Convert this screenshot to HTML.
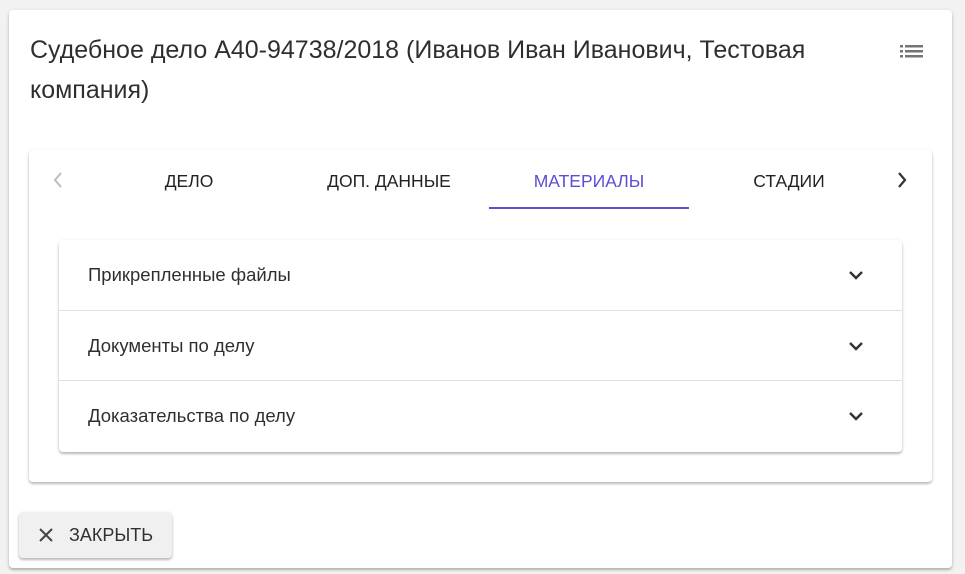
<!DOCTYPE html>
<html><head><meta charset="utf-8"><style>
*{box-sizing:border-box;margin:0;padding:0}
body{width:965px;height:574px;background:#f2f2f2;font-family:"Liberation Sans",sans-serif;color:rgba(0,0,0,.87);position:relative;overflow:hidden}
.outer{position:absolute;left:9px;top:10px;width:943px;height:558px;background:#fff;border-radius:4px;box-shadow:0 2px 2px rgba(0,0,0,.2),0 1px 5px rgba(0,0,0,.12)}
.title{position:absolute;left:21px;top:20px;width:820px;font-size:25px;line-height:40px;color:rgba(0,0,0,.82)}
.menu{position:absolute;left:891px;top:32px}
.inner{position:absolute;left:20px;top:140px;width:903px;height:332px;background:#fff;border-radius:4px;box-shadow:0 2px 2px rgba(0,0,0,.2),0 1px 4px rgba(0,0,0,.12)}
.tab{position:absolute;top:0;height:60px;line-height:62px;text-align:center;font-size:17.5px;width:200px;color:rgba(0,0,0,.87)}
.tab.act{color:#5a4ed6}
.ink{position:absolute;left:460px;top:57px;width:200px;height:2px;background:#5a4ed6}
.panel{position:absolute;left:30px;top:90px;width:843px;height:212px;background:#fff;border-radius:4px;box-shadow:0 2px 2px rgba(0,0,0,.22),0 1px 4px rgba(0,0,0,.1)}
.row{height:70.7px;border-bottom:1px solid #e0e0e0;position:relative;font-size:18.5px;line-height:70px;padding-left:29px;color:rgba(0,0,0,.82)}
.row:last-child{border-bottom:none}
.row svg{position:absolute;left:789px;top:29px}
.btn{position:absolute;left:10px;top:502px;width:153px;height:46px;background:#f0f0f0;border-radius:4px;box-shadow:0 2px 2px rgba(0,0,0,.22),0 1px 4px rgba(0,0,0,.1);font-size:18px;line-height:46px;padding-left:50px;color:rgba(0,0,0,.8)}
.btn svg{position:absolute;left:19px;top:15px}
</style></head><body>
<div class="outer">
<div class="title">Судебное дело А40-94738/2018 (Иванов Иван Иванович, Тестовая компания)</div>
<svg class="menu" width="24" height="16" viewBox="0 0 24 16"><g fill="#757575"><rect x="0" y="3" width="3" height="2.5"/><rect x="0" y="8" width="3" height="2.5"/><rect x="0" y="13" width="3" height="2.5"/><rect x="5" y="3" width="18" height="2.5"/><rect x="5" y="8" width="18" height="2.5"/><rect x="5" y="13" width="18" height="2.5"/></g></svg>
<div class="inner">
<svg style="position:absolute;left:24px;top:22px" width="10" height="16" viewBox="0 0 10 16"><path d="M8 1L2 8l6 7" stroke="#bdbdbd" stroke-width="2" fill="none"/></svg>
<div class="tab" style="left:60px">ДЕЛО</div>
<div class="tab" style="left:260px">ДОП. ДАННЫЕ</div>
<div class="tab act" style="left:460px">МАТЕРИАЛЫ</div>
<div class="tab" style="left:660px">СТАДИИ</div>
<div class="ink"></div>
<svg style="position:absolute;left:868px;top:22px" width="10" height="16" viewBox="0 0 10 16"><path d="M2 1l6 7-6 7" stroke="#333" stroke-width="2.2" fill="none"/></svg>
<div class="panel">
<div class="row">Прикрепленные файлы<svg width="16" height="12" viewBox="0 0 16 12"><path d="M2 3l6 6 6-6" stroke="#333" stroke-width="2.4" fill="none"/></svg></div>
<div class="row">Документы по делу<svg width="16" height="12" viewBox="0 0 16 12"><path d="M2 3l6 6 6-6" stroke="#333" stroke-width="2.4" fill="none"/></svg></div>
<div class="row">Доказательства по делу<svg width="16" height="12" viewBox="0 0 16 12"><path d="M2 3l6 6 6-6" stroke="#333" stroke-width="2.4" fill="none"/></svg></div>
</div>
</div>
<div class="btn"><svg width="16" height="16" viewBox="0 0 16 16"><path d="M2 2l12 12M14 2L2 14" stroke="#444" stroke-width="2"/></svg>ЗАКРЫТЬ</div>
</div>
</body></html>
